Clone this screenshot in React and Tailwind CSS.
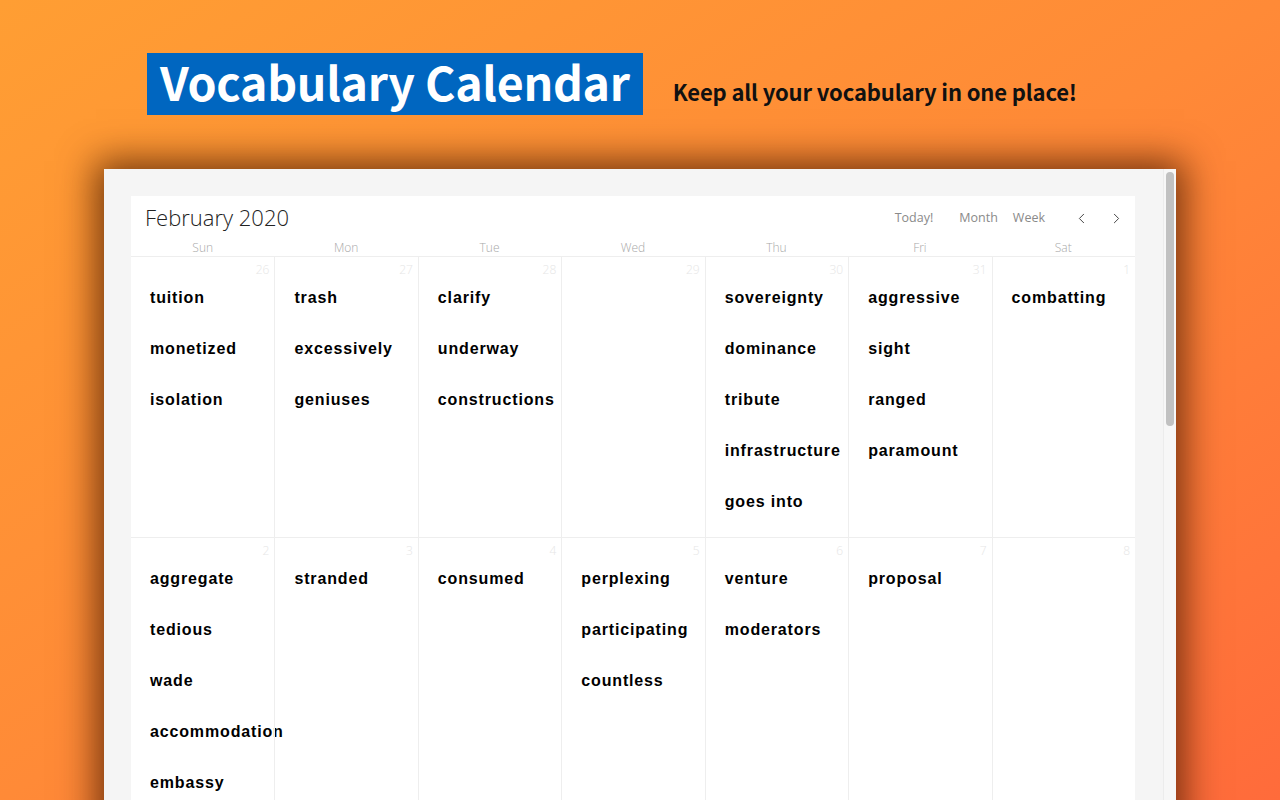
import { ChevronLeft, ChevronRight } from "lucide-react"

const weeks = [
  [
    { day: 26, words: ["tuition", "monetized", "isolation"] },
    { day: 27, words: ["trash", "excessively", "geniuses"] },
    { day: 28, words: ["clarify", "underway", "constructions"] },
    { day: 29, words: [] },
    { day: 30, words: ["sovereignty", "dominance", "tribute", "infrastructure", "goes into"] },
    { day: 31, words: ["aggressive", "sight", "ranged", "paramount"] },
    { day: 1, words: ["combatting"] },
  ],
  [
    { day: 2, words: ["aggregate", "tedious", "wade", "accommodation", "embassy"] },
    { day: 3, words: ["stranded"] },
    { day: 4, words: ["consumed"] },
    { day: 5, words: ["perplexing", "participating", "countless"] },
    { day: 6, words: ["venture", "moderators"] },
    { day: 7, words: ["proposal"] },
    { day: 8, words: [] },
  ],
]

const dayNames = ["Sun", "Mon", "Tue", "Wed", "Thu", "Fri", "Sat"]

function DayCell({ day, words, first }) {
  return (
    <div className={`h-[280px] pt-[5px] ${first ? "" : "border-l border-[#eeeeee]"}`}>
      <div className="pr-[5px] text-right text-[12px] leading-[16px] text-[#e6e6e6] font-['Open_Sans',sans-serif] font-light">
        {day}
      </div>
      <div className="mt-[10px] flex flex-col gap-[31px] pl-[19px]">
        {words.map((w) => (
          <div
            key={w}
            className="whitespace-nowrap text-[16px] leading-[20px] font-bold tracking-[0.85px] text-black font-['Liberation_Sans',Arial,sans-serif]"
          >
            {w}
          </div>
        ))}
      </div>
    </div>
  )
}

export default function App() {
  return (
    <div className="w-[1280px] h-[800px] overflow-hidden bg-gradient-to-br from-[#ff9e33] via-[#ff8a37] to-[#ff6b3b]">
      {/* top banner */}
      <div className="flex items-center pt-[53px] pl-[147px] font-['Noto_Sans_CJK_KR','Noto_Sans',sans-serif]">
        <div className="h-[62px] bg-[#0066c0] px-[13px] pb-[6px] flex items-center">
          <span className="text-[46.5px] leading-none font-bold text-white tracking-[-0.3px]">
            Vocabulary Calendar
          </span>
        </div>
        <span className="ml-[30px] mt-[15px] text-[22px] font-bold text-[#111111] tracking-[-0.15px]">
          Keep all your vocabulary in one place!
        </span>
      </div>

      {/* app window */}
      <div className="mt-[54px] ml-[104px] w-[1072px] h-[700px] bg-[#f5f5f5] flex shadow-[0_0_35px_8px_rgba(70,25,0,0.75)]">
        <div className="flex-1 pl-[27px] pt-[27px] pr-[28px]">
          <div className="bg-white">
            <div className="flex items-center justify-between h-[42px] pl-[14px] pr-[10px] font-['Open_Sans',sans-serif]">
              <span className="text-[22px] font-light text-[#222222] leading-none">February 2020</span>
              <div className="flex items-center pt-[2px] text-[12.5px] text-[#8a8a8a]">
                <span>Today!</span>
                <span className="ml-[26px]">Month</span>
                <span className="ml-[15px]">Week</span>
                <ChevronLeft className="ml-[28px] text-[#444444]" size={17} strokeWidth={1.4} />
                <ChevronRight className="ml-[18px] text-[#444444]" size={17} strokeWidth={1.4} />
              </div>
            </div>
            <div className="grid grid-cols-7 h-[19px] border-b border-[#eeeeee] font-['Open_Sans',sans-serif]">
              {dayNames.map((d) => (
                <div key={d} className="text-center text-[12px] font-light leading-[20px] text-[#a8a8a8]">
                  {d}
                </div>
              ))}
            </div>
            {weeks.map((week, wi) => (
              <div key={wi} className="grid grid-cols-7 border-b border-[#eeeeee]">
                {week.map((c, ci) => (
                  <DayCell key={c.day} day={c.day} words={c.words} first={ci === 0} />
                ))}
              </div>
            ))}
          </div>
        </div>
        {/* scrollbar */}
        <div className="w-[13px] border-l border-[#ececec] bg-[#f7f7f7] pt-[3px] flex justify-center">
          <div className="w-[8px] h-[254px] rounded-full bg-[#c1c1c1]" />
        </div>
      </div>
    </div>
  )
}
